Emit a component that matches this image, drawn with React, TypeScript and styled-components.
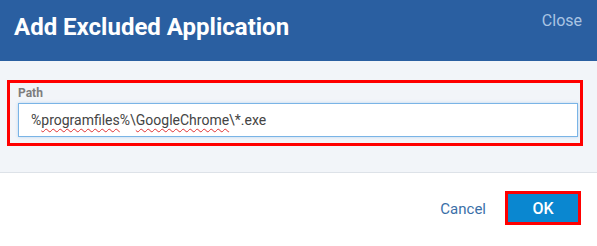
import { FC } from "react";
import styled, { createGlobalStyle } from "styled-components";

const GlobalStyle = createGlobalStyle`
  html, body {
    margin: 0;
    padding: 0;
    background: #ffffff;
    font-family: Roboto, "Liberation Sans", Arial, sans-serif;
  }
`;

const Dialog = styled.div`
  width: 597px;
  height: 246px;
  display: flex;
  flex-direction: column;
  background: #ffffff;
`;

const Header = styled.div`
  height: 61px;
  box-sizing: border-box;
  background: #2a5fa1;
  display: flex;
  justify-content: space-between;
  align-items: flex-start;
  padding: 0 15px 0 14px;
`;

const Title = styled.h1`
  margin: 0;
  padding-top: 13px;
  font-size: 24px;
  line-height: 28px;
  font-weight: 700;
  color: #ffffff;
`;

const CloseLink = styled.span`
  padding-top: 11px;
  font-size: 16px;
  line-height: 19px;
  color: #a9c4e3;
  cursor: pointer;
`;

const Body = styled.div`
  background: #f2f5f9;
  padding: 19px 14px 26px 7px;
  border-bottom: 1px solid #dde2e8;
`;

const Highlight = styled.div`
  border: 3px solid #ff0000;
  padding: 3px 2px 6px 8px;
`;

const Label = styled.div`
  font-size: 12px;
  line-height: 15px;
  font-weight: 700;
  color: #7d7d7d;
  margin-bottom: 2px;
`;

const Field = styled.div`
  height: 34px;
  box-sizing: border-box;
  background: #ffffff;
  border: 1px solid #7ab4e6;
  box-shadow: 0 0 3px rgba(122, 180, 230, 0.45);
  padding: 0 12px;
  display: flex;
  align-items: center;
  font-size: 14px;
  color: #444444;
`;

const Misspelled = styled.span`
  text-decoration: underline wavy #e03030;
  text-decoration-thickness: 1px;
  text-underline-offset: 3px;
`;

const Footer = styled.div`
  flex: 1;
  display: flex;
  justify-content: flex-end;
  align-items: flex-start;
  padding: 18px 16px 0 0;
  gap: 19px;
`;

const TextButton = styled.button`
  border: none;
  background: none;
  padding: 0;
  margin-top: 9px;
  font-family: inherit;
  font-size: 15px;
  line-height: 18px;
  color: #3a6fa8;
  cursor: pointer;
`;

const PrimaryButton = styled.button<{ $outlined?: boolean }>`
  width: 76px;
  height: 34px;
  box-sizing: border-box;
  border: 3px solid ${(p) => (p.$outlined ? "#ff0000" : "#0a87d0")};
  background: #0a87d0;
  color: #ffffff;
  font-family: inherit;
  font-size: 16px;
  font-weight: 500;
  cursor: pointer;
`;

const App: FC = () => {
  return (
    <Dialog>
      <GlobalStyle />
      <Header>
        <Title>Add Excluded Application</Title>
        <CloseLink>Close</CloseLink>
      </Header>
      <Body>
        <Highlight>
          <Label>Path</Label>
          <Field>
            <span>
              %<Misspelled>programfiles</Misspelled>%\
              <Misspelled>GoogleChrome</Misspelled>\*.exe
            </span>
          </Field>
        </Highlight>
      </Body>
      <Footer>
        <TextButton>Cancel</TextButton>
        <PrimaryButton $outlined>OK</PrimaryButton>
      </Footer>
    </Dialog>
  );
};

export default App;
